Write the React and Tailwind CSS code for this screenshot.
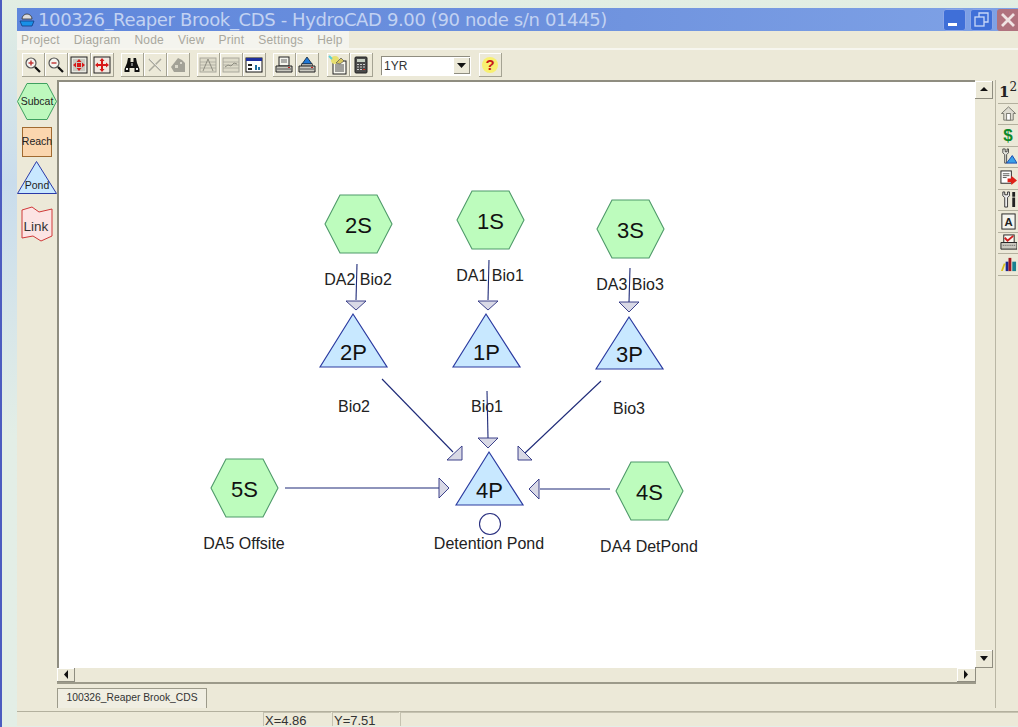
import React from 'react';

const font = { fontFamily: '"Liberation Sans", Arial, sans-serif' };

// ---- toolbar glyphs, all 18x18 ----
const Magnifier = ({ sign }) => (
  <svg width="18" height="18" viewBox="0 0 18 18">
    <circle cx="7" cy="7" r="5" fill="#f4f4f0" stroke="#555" strokeWidth="1.2" />
    <path d="M4.5 7h5" stroke="#c03030" strokeWidth="1.4" />
    {sign === 'plus' && <path d="M7 4.5v5" stroke="#c03030" strokeWidth="1.4" />}
    <path d="M11 11l5 5" stroke="#111" strokeWidth="2.2" />
  </svg>
);

const FitAll = () => (
  <svg width="18" height="18" viewBox="0 0 18 18">
    <rect x="1" y="1" width="16" height="16" fill="#e8e8e0" stroke="#222" />
    <rect x="3" y="3" width="12" height="12" fill="#c9c9c0" />
    <path d="M9 3l2.5 3h-5zM9 15l2.5-3h-5zM3 9l3-2.5v5zM15 9l-3-2.5v5z" fill="#d81818" />
    <path d="M7 7h4v4H7z" fill="#d81818" />
  </svg>
);

const FitMove = () => (
  <svg width="18" height="18" viewBox="0 0 18 18">
    <rect x="1" y="1" width="16" height="16" fill="#f0e8e0" stroke="#222" />
    <path d="M9 2l2.5 3H10v3h3V6.500l3 2.500-3 2.500V10h-3v3h1.500L9 16l-2.500-3H8v-3H5v1.500L2 9l3-2.500V8h3V5H6.500z" fill="#d81818" />
  </svg>
);

const Binoculars = () => (
  <svg width="18" height="18" viewBox="0 0 18 18">
    <path d="M5 2h2.500v4H10.500V2H13l1 5 2.500 6v3h-5v-4h-5v4h-5v-3L4 7z" fill="#111" />
    <path d="M3 12h2v2H3zM13 12h2v2h-2z" fill="#eee" />
    <path d="M8 7h2v3H8z" fill="#777" />
  </svg>
);

const CrossOut = () => (
  <svg width="18" height="18" viewBox="0 0 18 18">
    <path d="M3 3l12 12M15 3L3 15" stroke="#aaa99e" strokeWidth="1.5" />
    <path d="M4 3l12 12" stroke="#fff" strokeWidth="0.6" />
  </svg>
);

const GreyNodes = () => (
  <svg width="18" height="18" viewBox="0 0 18 18">
    <path d="M2 11l7-9 4 2 3 3v9H5z" fill="#a3a297" />
    <path d="M6 9h3v3H6zM11 6h2v2h-2z" fill="#dad8cb" />
  </svg>
);

const GreyChart = ({ zig }) => (
  <svg width="18" height="18" viewBox="0 0 18 18">
    <rect x="1" y="2" width="16" height="14" fill="#dedbca" stroke="#a9a89c" />
    <path d="M1 6h16M1 9h16M1 12h16" stroke="#a9a89c" strokeWidth="0.8" />
    {zig ? <path d="M3 11l3-2 3 1 3-3 3 1" fill="none" stroke="#8f8e82" /> : <path d="M4 15l5-12 5 12" fill="none" stroke="#8f8e82" />}
  </svg>
);

const Report = () => (
  <svg width="18" height="18" viewBox="0 0 18 18">
    <rect x="1" y="2" width="16" height="14" fill="#fff" stroke="#111" />
    <rect x="1" y="2" width="16" height="3" fill="#1e2f9c" />
    <path d="M3 8h4v2H3zM3 12h4v2H3z" fill="#222" />
    <path d="M10 14V9h2v5zM13 14v-3h2v3z" fill="#1e6fa0" />
  </svg>
);

const Printer = ({ pond }) => (
  <svg width="18" height="18" viewBox="0 0 18 18">
    {pond ? (
      <path d="M9 1l5 7H4z" fill="#1e78d8" stroke="#123" strokeWidth="0.8" />
    ) : (
      <rect x="4" y="1" width="10" height="9" fill="#f4f4ee" stroke="#222" />
    )}
    {!pond && <path d="M6 4h6M6 6h6" stroke="#666" />}
    {pond && <rect x="3.500" y="8" width="11" height="2" fill="#f4f4ee" stroke="#222" strokeWidth="0.7" />}
    <path d="M1 10h16v6H1z" fill="#c9c8bf" stroke="#222" />
    <path d="M2 13h14" stroke="#555" />
    <path d="M13 11.500h2" stroke="#c02020" />
  </svg>
);

const NotePad = () => (
  <svg width="20" height="20" viewBox="0 0 20 20">
    <rect x="5" y="6" width="13" height="13" fill="#f8f8f0" stroke="#222" />
    <path d="M7 10h9M7 12h9M7 14h9M7 16h9" stroke="#333" strokeWidth="0.9" />
    <circle cx="7" cy="5" r="4" fill="#e8e070" />
    <path d="M1 1l3 3" stroke="#5cd0d8" strokeWidth="2" />
    <path d="M8 8l5-5 3 3-4 3z" fill="#d8c860" stroke="#555" strokeWidth="0.7" />
  </svg>
);

const Calculator = () => (
  <svg width="18" height="18" viewBox="0 0 18 18">
    <rect x="3" y="1" width="12" height="16" rx="1" fill="#4a4a4a" stroke="#222" />
    <rect x="5" y="3" width="8" height="3" fill="#c7cfc2" />
    <path d="M5 8h2v1H5zM8 8h2v1H8zM11 8h2v1h-2zM5 10.500h2v1H5zM8 10.500h2v1H8zM11 10.500h2v1h-2zM5 13h2v1H5zM8 13h2v1H8z" fill="#ccc" />
    <path d="M11 13h2v1h-2z" fill="#e03020" />
  </svg>
);

const Help = () => (
  <svg width="20" height="20" viewBox="0 0 20 20">
    <circle cx="10" cy="10" r="8" fill="#f8f070" />
    <text x="10" y="15" textAnchor="middle" fontSize="15" fontWeight="700" fill="#c81818" style={font}>?</text>
  </svg>
);

const Btn = ({ children }) => (
  <div className="flex h-[24px] w-[23px] items-center justify-center border-r border-b border-[#a5a393] shadow-[inset_1px_1px_0_#fff]">
    {children}
  </div>
);

// ---- right-hand column ----
const sideIcons = [
  <span key="a" className="text-[15px] leading-none font-bold text-[#222]" style={{ fontFamily: '"DejaVu Serif", serif' }}>1<sup className="text-[12px] font-normal">2</sup></span>,
  <svg key="b" width="17" height="17" viewBox="0 0 18 18"><path d="M9 2L1.500 9H4v7h10V9h2.500z" fill="#dddbd0" stroke="#77776d" /><rect x="7" y="9" width="4" height="7" fill="#fff" stroke="#77776d" /></svg>,
  <span key="c" className="text-[17px] leading-none font-bold text-[#0c8a2a]" style={font}>$</span>,
  <svg key="d" width="17" height="17" viewBox="0 0 18 18"><path d="M3 1v4l2 2v9h2V7l2-2V1L7.500 1v3h-2V1z" fill="#e8e8e0" stroke="#222" strokeWidth="0.8" /><path d="M7 16l6-8 5 8z" fill="#3aa0e8" stroke="#1a4ab0" /></svg>,
  <svg key="e" width="17" height="17" viewBox="0 0 18 18"><rect x="1" y="1" width="11" height="13" fill="#fff" stroke="#222" /><path d="M3 4h7M3 6h7M3 8h4" stroke="#555" /><path d="M8 9h4V6l6 5-6 5v-3H8z" fill="#e02018" /></svg>,
  <svg key="f" width="17" height="17" viewBox="0 0 18 18"><path d="M3 1v4l2 2v10h3V7l2-2V1L8 1v3H5V1z" fill="#eee" stroke="#222" strokeWidth="0.9" /><path d="M13 1h3v5h-3zM13 7h3v10h-3z" fill="#222" /></svg>,
  <svg key="g" width="17" height="17" viewBox="0 0 18 18"><rect x="2" y="1" width="14" height="16" fill="#f4f4ee" stroke="#222" /><text x="9" y="14" textAnchor="middle" fontSize="12" fontWeight="700" fill="#222" style={font}>A</text></svg>,
  <svg key="h" width="17" height="17" viewBox="0 0 18 18"><rect x="4" y="1" width="11" height="8" fill="#f8f8f0" stroke="#222" /><path d="M5 4l3 3 6-5" fill="none" stroke="#d02020" strokeWidth="2" /><path d="M1 9h17v7H1z" fill="#c9c8bf" stroke="#222" /><path d="M3 12h13" stroke="#555" strokeDasharray="1 1" /></svg>,
  <svg key="i" width="17" height="17" viewBox="0 0 18 18"><path d="M1 16l3-8h2l-3 8z" fill="#d8c020" /><path d="M6 16V6h3v10z" fill="#182890" /><path d="M9 16V2h3v14z" fill="#a01820" /><path d="M13 16V6h4v10z" fill="#188090" /></svg>,
];

// ---- palette on the left ----
const Palette = () => (
  <div className="flex w-[40px] shrink-0 flex-col items-center pt-[3px]">
    <svg width="40" height="37" viewBox="0 0 40 37">
      <path d="M.5 18.500L10 .5h20l9.500 18-9.500 18H10z" fill="#bdf8bd" stroke="#3fa060" />
      <text x="20" y="22" textAnchor="middle" fontSize="10.500" fill="#222" style={font}>Subcat</text>
    </svg>
    <div className="mt-[7px] flex h-[30px] w-[30px] items-center justify-center border border-[#a06a30] bg-[#fbd6ae] text-[10.500px] text-[#222]" style={font}>Reach</div>
    <svg className="mt-[4px]" width="40" height="33" viewBox="0 0 40 33">
      <path d="M19.500 .5L39.500 32.500H.5z" fill="#c8e8ff" stroke="#2a3aa8" />
      <text x="20" y="28" textAnchor="middle" fontSize="10.500" fill="#222" style={font}>Pond</text>
    </svg>
    <svg className="mt-[11px]" width="32" height="38" viewBox="0 0 32 38">
      <path d="M1 5l10-3 7 5 13-3v27l-11 5-8-5-11 2z" fill="#fce4e4" stroke="#d03838" />
      <text x="15" y="26" textAnchor="middle" fontSize="13.500" fill="#333" style={font}>Link</text>
    </svg>
  </div>
);

// ---- flow diagram, coordinates are page pixels through the viewBox ----
const Hex = ({ x, y, label }) => (
  <g>
    <path
      d={`M${x} ${y + 29}L${x + 15} ${y}H${x + 52}L${x + 67} ${y + 29}L${x + 52} ${y + 58}H${x + 15}Z`}
      fill="#bdfcbd"
      stroke="#4f9a6a"
      strokeWidth="1.100"
    />
    <text x={x + 33.500} y={y + 38} textAnchor="middle" fontSize="22" fill="#111">{label}</text>
  </g>
);

const Tri = ({ x, top, base, label }) => (
  <g>
    <path d={`M${x} ${base}L${x + 33} ${top}L${x + 67} ${base}Z`} fill="#c8e8ff" stroke="#2a3aa0" strokeWidth="1.200" />
    <text x={x + 33.500} y={base - 7} textAnchor="middle" fontSize="22" fill="#111">{label}</text>
  </g>
);

const Wire = ({ d }) => <path d={d} fill="none" stroke="#1e2a78" strokeWidth="1.100" />;
const Head = ({ d }) => <path d={d} fill="#d9d9e6" stroke="#2a3080" strokeWidth="0.900" />;
const Lbl = ({ x, y, children }) => <text x={x} y={y} textAnchor="middle" fontSize="16" fill="#222">{children}</text>;

const Diagram = () => (
  <svg className="block" width="916" height="586" viewBox="59 82 916 586" style={font}>
    <Lbl x={358} y={285}>DA2 Bio2</Lbl>
    <Lbl x={490} y={281}>DA1 Bio1</Lbl>
    <Lbl x={630} y={290}>DA3 Bio3</Lbl>
    <Lbl x={354} y={412}>Bio2</Lbl>
    <Lbl x={487} y={412}>Bio1</Lbl>
    <Lbl x={629} y={414}>Bio3</Lbl>
    <Lbl x={244} y={549}>DA5 Offsite</Lbl>
    <Lbl x={489} y={549}>Detention Pond</Lbl>
    <Lbl x={649} y={552}>DA4 DetPond</Lbl>

    <Wire d="M357 264L356 300" />
    <Head d="M346 301H366L356 310Z" />
    <Wire d="M489 260L488 300" />
    <Head d="M478 301H498L488 310Z" />
    <Wire d="M630 268L629 302" />
    <Head d="M619 302H639L629 312Z" />

    <Wire d="M382 379L453 452" />
    <Head d="M447 460H462V446Z" />
    <Wire d="M487 391L488 438" />
    <Head d="M478 438H498L488 448Z" />
    <Wire d="M601 381L525 453" />
    <Head d="M518 446V460H532Z" />
    <Wire d="M285 488H439" />
    <Head d="M439 478V498L449 488Z" />
    <Wire d="M610 489H540" />
    <Head d="M539 479V499L529 489Z" />

    <Hex x={325} y={195} label="2S" />
    <Hex x={457} y={191} label="1S" />
    <Hex x={597} y={200} label="3S" />
    <Hex x={211} y={459} label="5S" />
    <Hex x={616} y={462} label="4S" />

    <Tri x={320} top={314} base={367} label="2P" />
    <Tri x={453} top={314} base={367} label="1P" />
    <Tri x={596} top={317} base={369} label="3P" />
    <Tri x={456} top={452} base={505} label="4P" />

    <circle cx={490} cy={524} r={10.500} fill="#fff" stroke="#2a3080" strokeWidth="1.100" />
  </svg>
);

const ScrollBtn = ({ dir, className }) => {
  const pts = { up: '1,6 9,6 5,2', down: '1,2 9,2 5,7', left: '7,0 7,9 3,4.500', right: '3,0 3,9 7,4.500' }[dir];
  return (
    <div className={`flex items-center justify-center border-r border-b border-[#8f8d80] bg-[#ece9d8] shadow-[inset_1px_1px_0_#fff] ${className}`}>
      <svg width="10" height="9" viewBox="0 0 10 9"><polygon points={pts} fill="#111" /></svg>
    </div>
  );
};

const menus = ['Project', 'Diagram', 'Node', 'View', 'Print', 'Settings', 'Help'];

export default function App() {
  return (
    <div className="flex h-[727px] w-[1018px] overflow-hidden bg-gradient-to-b from-[#e2eee3] via-[#c9dcec] via-25% to-[#e3eee6] to-60%" style={font}>
      <div className="w-[2px] shrink-0 bg-[#4c5cc0]" />
      <div className="ml-[15px] mt-[8px] mb-[1px] flex min-w-0 flex-1 flex-col bg-[#ece9d8]">
        {/* title bar */}
        <div className="flex h-[23px] shrink-0 items-center bg-gradient-to-r from-[#5f87dc] via-[#6c90dd] to-[#7fa2e6]">
          <svg className="ml-[1px]" width="18" height="18" viewBox="0 0 18 18">
            <path d="M4 8a5 5 0 0 1 10 0z" fill="#ddd" stroke="#333" strokeWidth="0.800" />
            <path d="M2 10h14l-2 5H4z" fill="#1890e8" stroke="#123a80" strokeWidth="0.800" />
          </svg>
          <span className="ml-[2px] text-[18px] leading-none whitespace-nowrap text-[#c2d2f2]" style={{ fontFamily: '"DejaVu Sans", sans-serif', letterSpacing: '-0.37px' }}>
            100326_Reaper Brook_CDS - HydroCAD 9.00 (90 node s/n 01445)
          </span>
          <div className="ml-auto flex items-center gap-[4px]">
            <div className="flex h-[22px] w-[23px] items-end rounded-[3px] border border-[#8aa6e8] bg-[#3f6fd8] pb-[4px] pl-[4px]">
              <div className="h-[3px] w-[9px] bg-white" />
            </div>
            <div className="flex h-[22px] w-[23px] items-center justify-center rounded-[3px] border border-[#8aa6e8] bg-[#3f6fd8]">
              <svg width="15" height="15" viewBox="0 0 15 15" fill="none" stroke="#c8d8f8" strokeWidth="1.300">
                <rect x="1" y="5" width="9" height="9" /><path d="M5 5V1h9v9h-4" />
              </svg>
            </div>
            <div className="flex h-[22px] w-[21px] items-center justify-center rounded-l-[3px] bg-[#b0727e]">
              <svg width="16" height="16" viewBox="0 0 16 16"><path d="M2 2l12 12M14 2L2 14" stroke="#f0e4e4" strokeWidth="2.800" /></svg>
            </div>
          </div>
        </div>

        {/* menu */}
        <div className="flex h-[19px] shrink-0 border-b-2 border-[#f7f6ef]">
          <div className="flex w-[332px] items-center gap-[14px] bg-[#f4f4ee] pl-[4px] text-[12px] tracking-[.2px] text-[#a9a89e]">
            {menus.map(m => <span key={m}>{m}</span>)}
          </div>
        </div>

        {/* toolbar */}
        <div className="flex h-[30px] shrink-0 items-center pl-[5px]">
          <Btn><Magnifier sign="plus" /></Btn>
          <Btn><Magnifier /></Btn>
          <Btn><FitAll /></Btn>
          <Btn><FitMove /></Btn>
          <div className="w-[7px]" />
          <Btn><Binoculars /></Btn>
          <Btn><CrossOut /></Btn>
          <Btn><GreyNodes /></Btn>
          <div className="w-[7px]" />
          <Btn><GreyChart /></Btn>
          <Btn><GreyChart zig /></Btn>
          <Btn><Report /></Btn>
          <div className="w-[7px]" />
          <Btn><Printer /></Btn>
          <Btn><Printer pond /></Btn>
          <div className="w-[8px]" />
          <Btn><NotePad /></Btn>
          <Btn><Calculator /></Btn>
          <div className="ml-[8px] flex h-[19px] w-[89px] items-center justify-between border-t border-l border-[#8f8d80] bg-white pl-[2px] text-[12px] text-[#333] shadow-[1px_1px_0_#fff]">
            1YR
            <div className="flex h-[17px] w-[17px] items-center justify-center bg-[#ece9d8] shadow-[inset_1px_1px_0_#fff,inset_-1px_-1px_0_#8f8d80]">
              <svg width="9" height="5" viewBox="0 0 9 5"><path d="M0 0h9L4.500 5z" fill="#111" /></svg>
            </div>
          </div>
          <div className="w-[9px]" />
          <Btn><Help /></Btn>
        </div>

        {/* work area */}
        <div className="flex min-h-0 flex-1">
          <Palette />
          <div className="flex w-[938px] shrink-0 flex-col">
            <div className="flex h-[588px] shrink-0">
              <div className="w-[918px] shrink-0 border-t-2 border-l-2 border-[#8f8d80] bg-white">
                <Diagram />
              </div>
              <div className="flex w-[18px] shrink-0 flex-col justify-between pt-[1px]">
                <ScrollBtn dir="up" className="h-[18px] w-[18px]" />
                <ScrollBtn dir="down" className="h-[18px] w-[18px]" />
              </div>
            </div>
            <div className="flex h-[16px] w-[919px] shrink-0 justify-between border-b-2 border-[#9c9a8a]">
              <ScrollBtn dir="left" className="h-[14px] w-[18px]" />
              <ScrollBtn dir="right" className="h-[14px] w-[19px]" />
            </div>
            <div className="mt-[4px] flex h-[20px] w-[150px] items-center justify-center border-l border-r border-[#9c9a8a] bg-[#f0eee2] text-[10.300px] text-[#333] shadow-[inset_0_1px_0_#9c9a8a]">
              100326_Reaper Brook_CDS
            </div>
          </div>
          {/* right-hand tool column */}
          <div className="mb-[3px] flex w-[23px] shrink-0 flex-col border-l border-[#b9b6a4] pt-[2px] pl-[2px]">
            {sideIcons.map((icon, i) => (
              <div key={i} className="flex h-[21.500px] w-[20px] items-center justify-center border-b border-[#b3b09e]">{icon}</div>
            ))}
          </div>
        </div>

        {/* status bar */}
        <div className="flex h-[15px] shrink-0 border-t border-[#b3b09e] text-[13px] leading-[15px] text-[#333]">
          <div className="w-[246px] shrink-0" />
          <div className="w-[68px] shrink-0 border-t border-l border-[#c5c2b0] pl-[1px]">X=4.86</div>
          <div className="ml-[1px] w-[67px] shrink-0 border-t border-l border-[#c5c2b0] pl-[1px]">Y=7.51</div>
          <div className="ml-[1px] flex-1 border-t border-l border-[#c5c2b0]" />
        </div>
      </div>
    </div>
  );
}
